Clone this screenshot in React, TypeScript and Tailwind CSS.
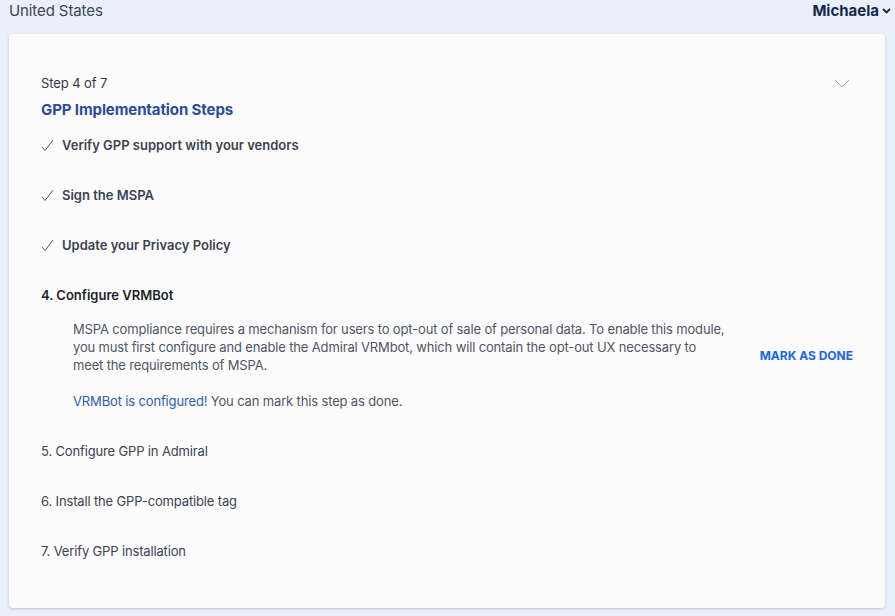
import React from "react";

const CheckIcon = () => (
  <svg width="13" height="13" viewBox="0 0 13 13" className="shrink-0">
    <path d="M1 8 L4 11.5 L12 1" fill="none" stroke="#555b66" strokeWidth="1" />
  </svg>
);

export default function App() {
  const font = { fontFamily: "Inter, 'Noto Sans', sans-serif" };
  return (
    <div className="w-[895px] h-[616px] bg-[#e9effb] flex flex-col overflow-hidden" style={font}>
      <div className="h-[34px] flex items-start justify-between pl-[9px] pr-[4px]">
        <div className="text-[15px] leading-[22px] text-[#3a4656] tracking-[-0.1px]">United States</div>
        <div className="flex items-center gap-[3px] text-[15px] leading-[22px] font-bold text-[#13294b]">
          Michaela
          <svg width="9" height="6" viewBox="0 0 9 6">
            <path d="M1 1 L4.5 4.5 L8 1" fill="none" stroke="#13294b" strokeWidth="1.8" />
          </svg>
        </div>
      </div>
      <div className="ml-[9px] mr-[10px] h-[574px] bg-[#fcfcfd] rounded-[4px] shadow-[0_1px_3px_rgba(60,70,100,0.25)] px-[32px] pt-[40px] flex flex-col">
        <div className="flex justify-between items-start">
          <div>
            <div className="text-[13px] leading-[18px] text-[#30363f] tracking-[-0.1px]">Step 4 of 7</div>
            <div className="mt-[9px] text-[15px] leading-[18px] font-bold text-[#2b4b9b] tracking-[-0.1px]">GPP Implementation Steps</div>
          </div>
          <svg width="16" height="9" viewBox="0 0 16 9" className="mt-[5px] mr-[3px]">
            <path d="M1 1 L8 8 L15 1" fill="none" stroke="#a8adb5" strokeWidth="1" />
          </svg>
        </div>
        <div className="flex flex-col mt-[17px]">
          {["Verify GPP support with your vendors", "Sign the MSPA", "Update your Privacy Policy"].map((t) => (
            <div key={t} className="h-[50px] flex items-start">
              <div className="flex items-center gap-[8px] h-[18px]">
                <CheckIcon />
                <span className="text-[13px] leading-[18px] font-semibold text-[#3b4350]">{t}</span>
              </div>
            </div>
          ))}
          <div className="text-[13px] leading-[18px] font-semibold text-[#1b1f27]">4. Configure VRMBot</div>
          <div className="flex items-center mt-[16px] pl-[32px]">
            <div className="w-[656px] text-[13px] leading-[18px] text-[#4f5665] tracking-[-0.15px]">
              <p>
                MSPA compliance requires a mechanism for users to opt-out of sale of personal data. To enable this module, you must first configure and enable the Admiral VRMbot, which will contain the opt-out UX necessary to meet the requirements of MSPA.
              </p>
              <p className="mt-[18px]">
                <span className="text-[#2f5bb5]">VRMBot is configured!</span> You can mark this step as done.
              </p>
            </div>
            <div className="flex-1 flex justify-end">
              <span className="text-[12px] font-bold text-[#1a66f0] -mt-[18px]">MARK AS DONE</span>
            </div>
          </div>
          <div className="mt-[32px] flex flex-col">
            {["5. Configure GPP in Admiral", "6. Install the GPP-compatible tag", "7. Verify GPP installation"].map((t) => (
              <div key={t} className="h-[50px] text-[13px] leading-[18px] text-[#3b4350] tracking-[-0.15px]">{t}</div>
            ))}
          </div>
        </div>
      </div>
    </div>
  );
}
